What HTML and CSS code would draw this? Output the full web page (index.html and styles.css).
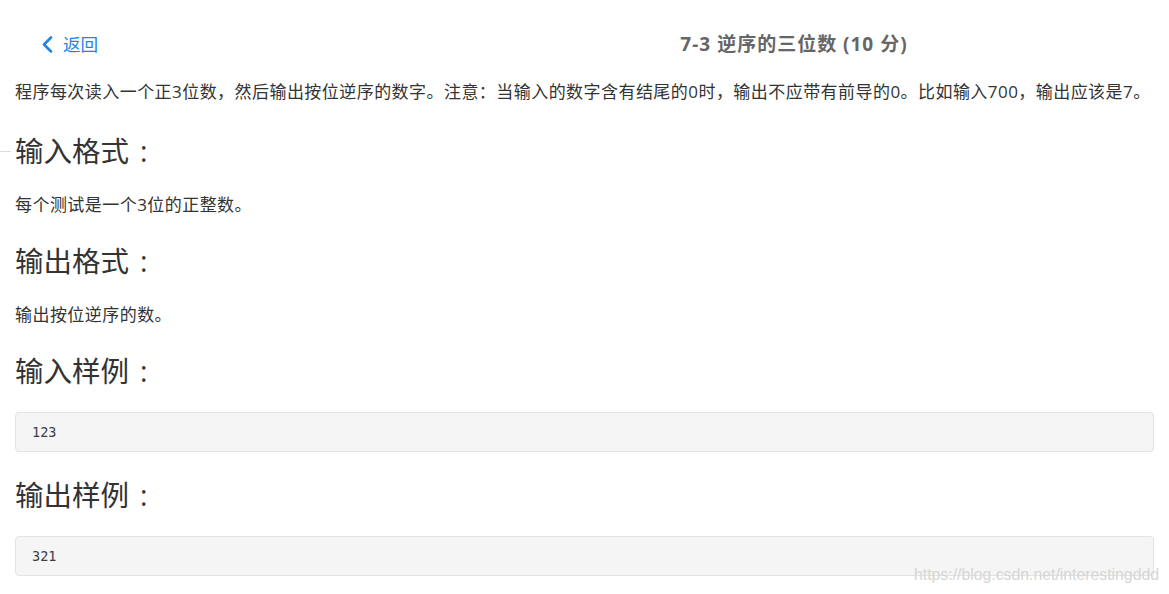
FILE: index.html
```html
<!DOCTYPE html>
<html lang="zh">
<head>
    <meta charset="UTF-8">
    <meta name="viewport" content="width=device-width, initial-scale=1.0">
    <title>7-3 逆序的三位数 (10 分)</title>
    <link rel="stylesheet" href="styles.css">
</head>
<body>
    <div class="page">
        <div class="top-bar">
            <a class="back-link" href="#">
                <svg class="back-icon" width="12" height="17" viewBox="0 0 12 17"><path d="M10 1.5 L3 8.5 L10 15.5" fill="none" stroke="#1f86e8" stroke-width="2.6" stroke-linecap="round" stroke-linejoin="round"/></svg>
                <span>返回</span>
            </a>
            <div class="problem-title">7-3 逆序的三位数 (10 分)</div>
        </div>

        <div class="content">
            <p class="text first">程序每次读入一个正3位数，然后输出按位逆序的数字。注意：当输入的数字含有结尾的0时，输出不应带有前导的0。比如输入700，输出应该是7。</p>

            <h2 class="section-title">输入格式<span class="colon">:</span></h2>
            <p class="text">每个测试是一个3位的正整数。</p>

            <h2 class="section-title">输出格式<span class="colon">:</span></h2>
            <p class="text">输出按位逆序的数。</p>

            <h2 class="section-title">输入样例<span class="colon">:</span></h2>
            <pre class="sample">123</pre>

            <h2 class="section-title">输出样例<span class="colon">:</span></h2>
            <pre class="sample">321</pre>
        </div>
    </div> <!-- End page -->

    <span class="edge-mark"></span>
    <div class="watermark">https://blog.csdn.net/interestingddd</div>
</body>
</html>
```

FILE: styles.css
```css
    body{
        margin: 0;
        background: #fff;
        color: #333;
        font-family: "Open Sans", "Noto Sans CJK SC", sans-serif;
    }
    .page{
        position: relative;
        width: 1169px;
        min-height: 594px;
    }

    .top-bar{
        display: grid;
        grid-template-columns: 419px 1fr;
        align-items: center;
        height: 40px;
        padding-top: 24px;
    }
    .back-link{
        display: flex;
        align-items: center;
        gap: 10px;
        padding-left: 41px;
        color: #1f86e8;
        text-decoration: none;
        font-size: 17.6px;
        line-height: 40px;
        font-family: "Noto Sans CJK SC", sans-serif;
    }
    .back-icon{
        display: block;
    }
    .problem-title{
        text-align: center;
        color: #666;
        font-size: 19px;
        font-weight: bold;
        letter-spacing: 1px;
        line-height: 40px;
        font-family: "Open Sans", "Noto Sans CJK SC", sans-serif;
    }

    .content{
        padding: 15px 15px 0 15px;
    }
    .text{
        margin: 0;
        font-size: 17px;
        line-height: 26px;
        color: #333;
        letter-spacing: 0.45px;
    }
    .text.first{
        white-space: nowrap;
    }
    .section-title{
        margin: 22px 0 21px;
        font-size: 28.5px;
        font-weight: normal;
        line-height: 40px;
        color: #333;
        font-family: "Noto Sans CJK SC", sans-serif;
    }
    .text.first + .section-title{
        margin-top: 25px;
    }
    .colon{
        margin-left: 11px;
        font-family: "Open Sans", sans-serif;
    }
    .sample{
        margin: 0;
        padding: 0 16px;
        height: 38px;
        line-height: 38px;
        background: #f5f5f5;
        border: 1px solid #e3e3e3;
        border-radius: 4px;
        font-family: "DejaVu Sans Mono", monospace;
        font-size: 13.5px;
        color: #3a3f4a;
    }
    .section-title:has(+ .sample){
        margin-bottom: 21px;
    }
    .sample + .section-title{
        margin-top: 22px;
        margin-bottom: 21px;
    }

    .edge-mark{
        position: absolute;
        left: 0;
        top: 151px;
        width: 11px;
        height: 1px;
        background: #ddd;
    }
    .watermark{
        position: absolute;
        left: 914px;
        top: 566px;
        font-family: "Liberation Sans", Arial, sans-serif;
        font-size: 15.8px;
        color: #d6d6d6;
        white-space: nowrap;
    }
```
